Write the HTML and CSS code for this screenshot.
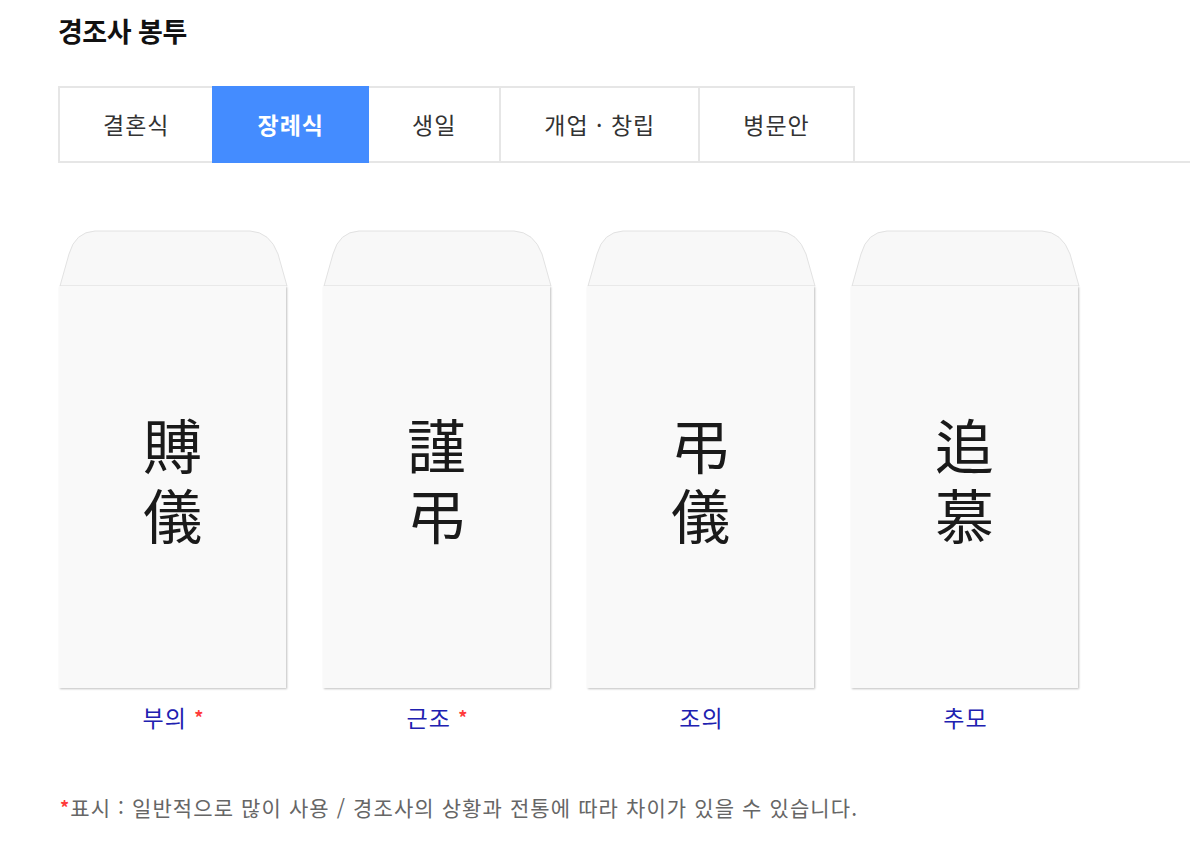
FILE: index.html
```html
<!DOCTYPE html>
<html lang="ko">
<head>
<meta charset="UTF-8">
<meta name="viewport" content="width=device-width, initial-scale=1.0">
<title>경조사 봉투</title>
<link rel="stylesheet" href="styles.css">
</head>
<body>

<div class="page">
    <h2 class="title">경조사 봉투</h2>

    <ul class="tabs">
        <li class="tab">결혼식</li>
        <li class="tab active">장례식</li>
        <li class="tab">생일</li>
        <li class="tab">개업 · 창립</li>
        <li class="tab">병문안</li>
    </ul>

    <div class="envelopes">
        <div class="envelope">
            <svg class="flap" viewBox="0 0 229 56" preserveAspectRatio="none">
                <path d="M1,56 L10,24 Q16,2 36,1 L191,1 Q211,2 219,24 L228,56 Z" fill="#f8f8f8" stroke="#e2e2e2" stroke-width="1"/>
            </svg>
            <div class="body">
                <p class="word">賻<br>儀</p>
            </div>
            <p class="name">부의 <em>*</em></p>
        </div>
        <div class="envelope">
            <svg class="flap" viewBox="0 0 229 56" preserveAspectRatio="none">
                <path d="M1,56 L10,24 Q16,2 36,1 L191,1 Q211,2 219,24 L228,56 Z" fill="#f8f8f8" stroke="#e2e2e2" stroke-width="1"/>
            </svg>
            <div class="body">
                <p class="word">謹<br>弔</p>
            </div>
            <p class="name">근조 <em>*</em></p>
        </div>
        <div class="envelope">
            <svg class="flap" viewBox="0 0 229 56" preserveAspectRatio="none">
                <path d="M1,56 L10,24 Q16,2 36,1 L191,1 Q211,2 219,24 L228,56 Z" fill="#f8f8f8" stroke="#e2e2e2" stroke-width="1"/>
            </svg>
            <div class="body">
                <p class="word">弔<br>儀</p>
            </div>
            <p class="name">조의</p>
        </div>
        <div class="envelope">
            <svg class="flap" viewBox="0 0 229 56" preserveAspectRatio="none">
                <path d="M1,56 L10,24 Q16,2 36,1 L191,1 Q211,2 219,24 L228,56 Z" fill="#f8f8f8" stroke="#e2e2e2" stroke-width="1"/>
            </svg>
            <div class="body">
                <p class="word">追<br>慕</p>
            </div>
            <p class="name">추모</p>
        </div>
    </div>

    <p class="note"><em>*</em>표시 : 일반적으로 많이 사용 / 경조사의 상황과 전통에 따라 차이가 있을 수 있습니다.</p>
</div>

</body>
</html>
```

FILE: styles.css
```css
body {
    margin: 0;
    padding: 0;
    background: #fff;
    font-family: "Noto Sans CJK KR", "Noto Sans", sans-serif;
    color: #333;
}

.page {
    padding: 10px 0 0 58px;
}

.title {
    margin: 0;
    font-size: 27px;
    line-height: 42px;
    font-weight: bold;
    color: #111;
    letter-spacing: -0.5px;
}

/* 탭 메뉴 */
.tabs {
    display: flex;
    list-style: none;
    margin: 34px 0 0 0;
    padding: 0;
    border-bottom: 2px solid #e6e6e6;
}

.tab {
    padding: 0 43px;
    height: 73px;
    line-height: 72px;
    font-size: 23px;
    color: #333;
    border: 2px solid #e6e6e6;
    border-bottom: none;
    margin-left: -2px;
    letter-spacing: 1px;
}

.tab:first-child {
    margin-left: 0;
}

.tab.active {
    background-color: #448cff;
    border-color: #448cff;
    color: #fff;
    font-weight: bold;
    margin-bottom: -2px;
    height: 75px;
    position: relative;
}

/* 봉투 목록 */
.envelopes {
    display: flex;
    gap: 35px;
    margin-top: 67px;
    padding-left: 1px;
}

.envelope {
    width: 229px;
    display: flex;
    flex-direction: column;
    align-items: center;
}

.flap {
    display: block;
    width: 229px;
    height: 56px;
}

.body {
    width: 227px;
    height: 402px;
    margin-right: 2px;
    box-sizing: border-box;
    padding-bottom: 16px;
    background-color: #f9f9f9;
    box-shadow: 1px 1px 2px rgba(0, 0, 0, 0.25);
    display: flex;
    align-items: center;
    justify-content: center;
}

.word {
    margin: 0;
    font-size: 59px;
    line-height: 70px;
    color: #1a1a1a;
    text-align: center;
}

.name {
    margin: 14px 0 0 0;
    font-size: 23px;
    line-height: 30px;
    color: #2020b0;
    letter-spacing: 1px;
}

.name em,
.note em {
    font-style: normal;
    color: #ff3b3b;
    font-size: 18px;
    font-weight: bold;
    vertical-align: top;
}

.note {
    margin: 60px 0 0 2px;
    font-size: 21px;
    line-height: 30px;
    color: #666;
    letter-spacing: 1.1px;
}
```
